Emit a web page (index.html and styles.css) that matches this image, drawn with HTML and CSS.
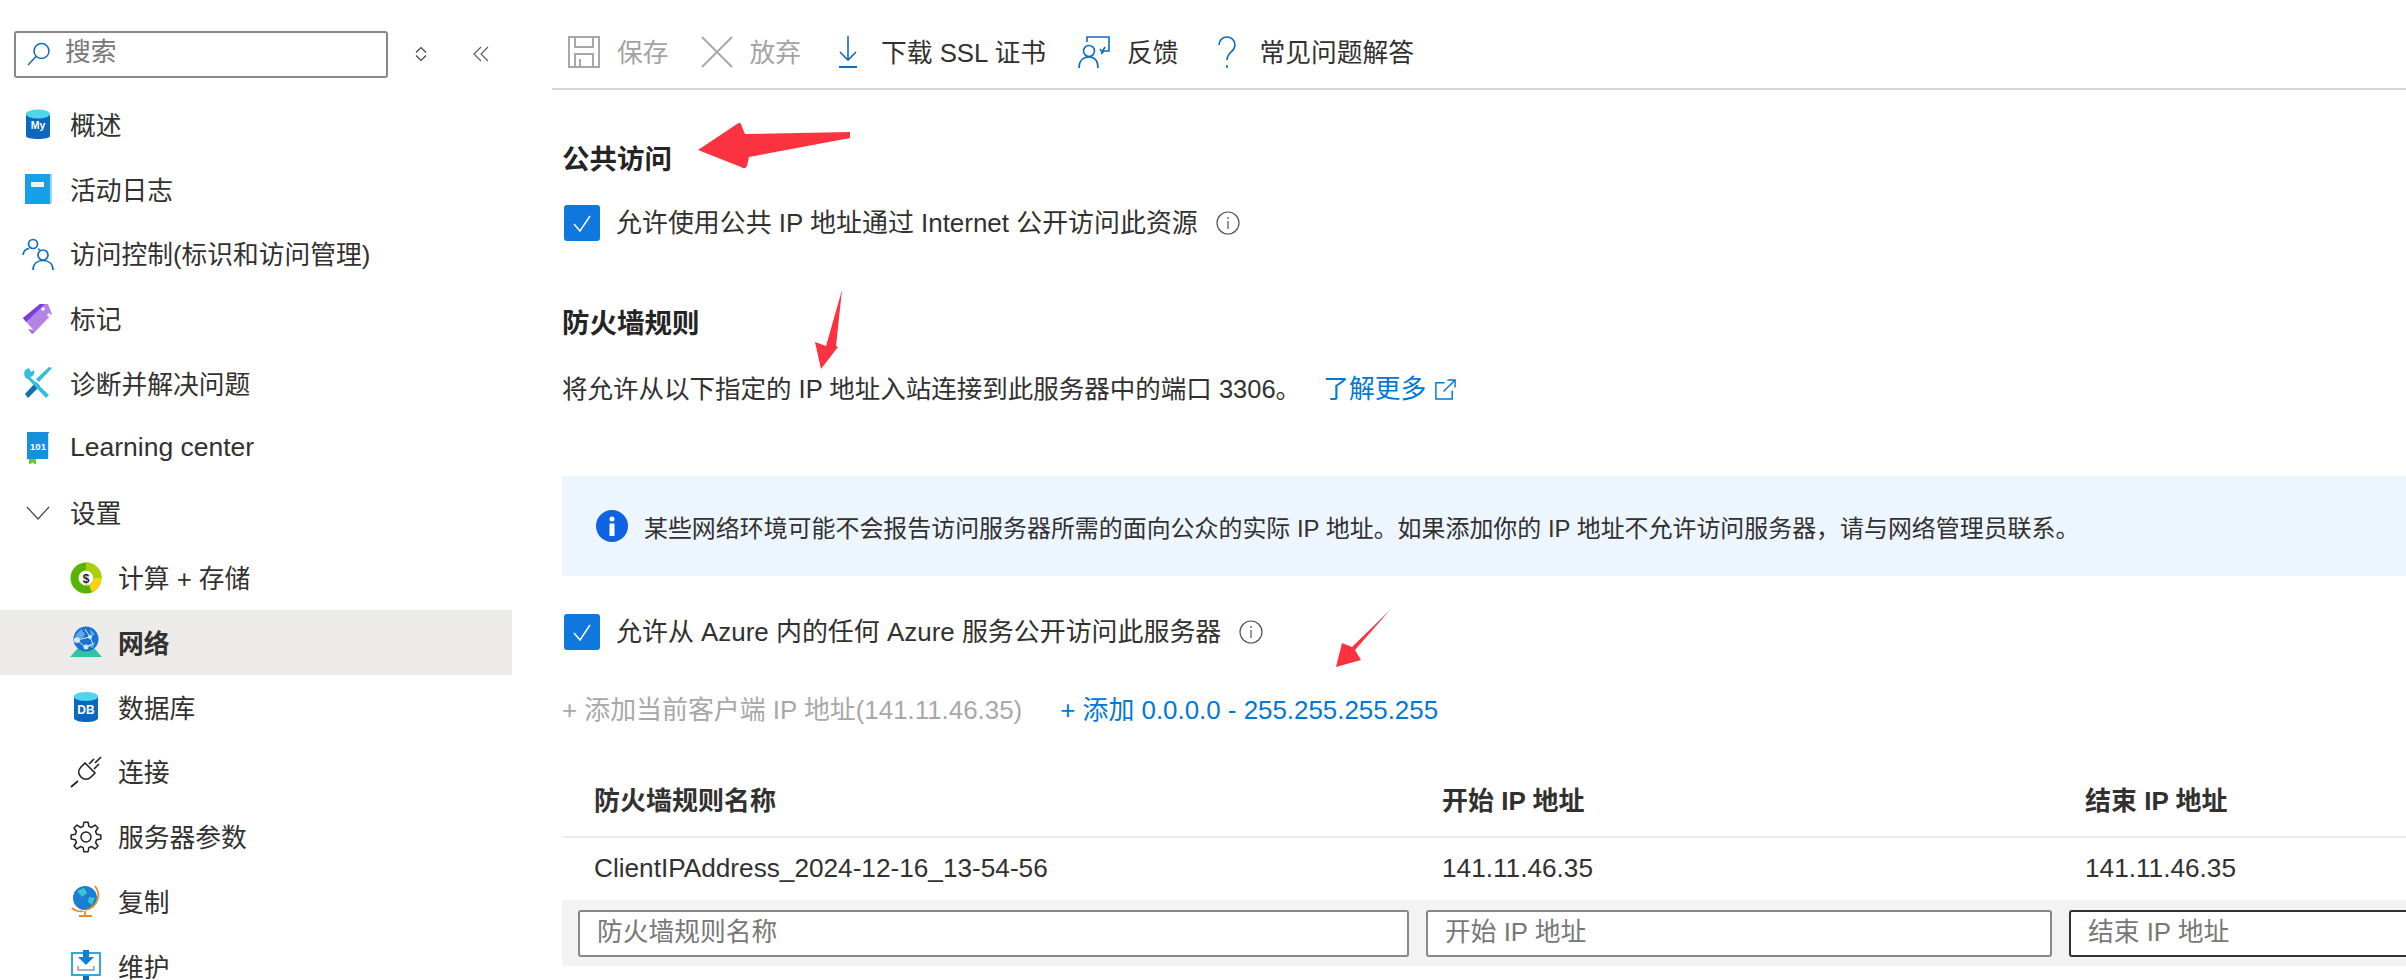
FILE: index.html
```html
<!DOCTYPE html>
<html lang="zh-CN">
<head>
  <meta charset="UTF-8">
  <meta name="viewport" content="width=device-width, initial-scale=1.0">
  <title>网络</title>
  <link rel="stylesheet" href="styles.css">
</head>
<body>

  <aside class="sidebar">
    <div class="search-row">
      <div class="search-box">
        <svg class="search-icon" viewBox="0 0 24 24" fill="none" stroke="#0f6cbd" stroke-width="1.5"><circle cx="14.5" cy="9" r="7.5"/><path d="M9 14.5 1 23"/></svg>
        <input type="text" placeholder="搜索">
      </div>
      <svg class="updown" viewBox="0 0 14 16" fill="none" stroke="#444" stroke-width="1.2"><path d="M2 6.5 7 1.5l5 5M2 9.5l5 5 5-5"/></svg>
      <svg class="collapse" viewBox="0 0 16 16" fill="none" stroke="#555" stroke-width="1.1"><path d="M8 1 1 8l7 7M15 1 8 8l7 7"/></svg>
    </div>

    <ul class="nav">
      <li class="nav-item">
        <svg class="ic" viewBox="0 0 32 32"><path d="M4 6v22c0 2 5.500 3 12 3s12-1 12-3V6z" fill="#0a68bd"/><ellipse cx="16" cy="6" rx="12" ry="4.500" fill="#50d5ea"/><text x="16" y="21" class="ic-text" font-size="10.500">My</text></svg>
        <span>概述</span>
      </li>
      <li class="nav-item">
        <svg class="ic" viewBox="0 0 32 32"><path d="M3 1h25v30H3z" fill="#16a0ea"/><path d="M28 1h2v29l-2 1z" fill="#9ed4f2"/><path d="M9 9h13v5H9z" fill="#e8f4fb"/></svg>
        <span>活动日志</span>
      </li>
      <li class="nav-item">
        <svg class="ic" viewBox="0 0 32 32" fill="none" stroke="#1169c4" stroke-width="1.700"><circle cx="11" cy="6" r="4.500"/><path d="M1 17c.5-4 3-6 6-6.500M16 11c1 .2 1.500 .5 2 1"/><circle cx="21" cy="17" r="5"/><path d="M11 32c0-6 4-9.500 10-9.500S31 26 31 32"/></svg>
        <span>访问控制(标识和访问管理)</span>
      </li>
      <li class="nav-item">
        <svg class="ic" viewBox="0 0 32 32"><path d="M1 15 18 1h8l4 10-17 18z" fill="#b582e6"/><path d="M1 15 18 1h5L4 19z" fill="#7b3fdb"/><path d="M13 29l-3 2-4-5 5 1z" fill="#9c6bd8"/><circle cx="21" cy="6" r="1.800" fill="#fff"/><circle cx="27" cy="12" r="1.800" fill="#fff"/></svg>
        <span>标记</span>
      </li>
      <li class="nav-item">
        <svg class="ic" viewBox="0 0 32 32"><path d="M30 1 17 15l-3-3L27 0z" fill="#32bedd"/><path d="M14 15 3 27l3 4 12-12z" fill="#1071ad"/><path d="M3 3l4-2 2 4 3-2c1 4-1 7-4 7l19 18-3 3-18-19c-3 0-5-5-3-9z" fill="#32bedd"/></svg>
        <span>诊断并解决问题</span>
      </li>
      <li class="nav-item">
        <svg class="ic" viewBox="0 0 32 32"><path d="M5 0h22v27H5z" fill="#1590dc"/><path d="M26 1h1v26h-1z" fill="#cfe8f8"/><path d="M7 27h7v6l-3.500-2.500L7 33z" fill="#6bcb28"/><text x="16" y="18" class="ic-text" font-size="9.500">101</text></svg>
        <span class="latin">Learning center</span>
      </li>
      <li class="nav-item">
        <svg class="ic chevron" viewBox="0 0 24 14" fill="none" stroke="#444" stroke-width="1.200"><path d="M1 1l11 12L23 1"/></svg>
        <span>设置</span>
      </li>
      <li class="nav-item sub">
        <svg class="ic" viewBox="0 0 32 32"><circle cx="16" cy="16" r="11.500" fill="none" stroke="#57b400" stroke-width="8"/><path d="M16 .500A15.500 15.500 0 0 1 31.500 16h-8A7.500 7.500 0 0 0 16 8.500z" fill="#a9d100"/><path d="M31.500 16A15.500 15.500 0 0 1 22 30.300l-3-7.400A7.500 7.500 0 0 0 23.500 16z" fill="#fcd116"/><text x="16" y="20.500" class="ic-dollar">$</text></svg>
        <span>计算 + 存储</span>
      </li>
      <li class="nav-item sub active">
        <svg class="ic" viewBox="0 0 32 32"><path d="M0 31 8 22h16l8 9z" fill="#2fc4a6"/><circle cx="16" cy="13" r="12.500" fill="#1a72cf"/><path d="M5 10l6-7 4 5-3 5zM20 3l5 5-4 3zM17 20l8-4-2 6z" fill="#5ea7e8"/><path d="M7 14l13-3 3 7-8 3zM20 11l-5-8" stroke="#d6e6f7" stroke-width="1" fill="none"/><circle cx="7" cy="14" r="3" fill="#d6e6f7"/><circle cx="20" cy="11" r="2" fill="#d6e6f7"/><circle cx="16" cy="21" r="2.500" fill="#d6e6f7"/></svg>
        <span>网络</span>
      </li>
      <li class="nav-item sub">
        <svg class="ic" viewBox="0 0 32 32"><path d="M4 6v21c0 2.500 5.500 4 12 4s12-1.500 12-4V6z" fill="#0a68bd"/><ellipse cx="16" cy="5.500" rx="12" ry="4.500" fill="#50d5ea"/><text x="16" y="23" class="ic-text" font-size="12">DB</text></svg>
        <span>数据库</span>
      </li>
      <li class="nav-item sub">
        <svg class="ic" viewBox="0 0 32 32" fill="none" stroke="#222" stroke-width="1.700" stroke-linejoin="round"><path d="M1 31l7-6M25 7l6-6M19 8l5-5M24 13l5-5M15 7l10 10-4 4c-3 3-7 3-10 0s-3-7 0-10z"/></svg>
        <span>连接</span>
      </li>
      <li class="nav-item sub">
        <svg class="ic" viewBox="0 0 32 32" fill="none" stroke="#222" stroke-width="1.500" stroke-linejoin="round"><path d="M13.150 5.370 13.910 1.150H18.090L18.850 5.370 21.500 6.470 25.030 4.020 27.980 6.970 25.530 10.500 26.630 13.150 30.850 13.910V18.090L26.630 18.850 25.530 21.500 27.980 25.030 25.030 27.980 21.500 25.530 18.850 26.630 18.090 30.850H13.910L13.150 26.630 10.500 25.530 6.970 27.980 4.020 25.030 6.470 21.500 5.370 18.850 1.150 18.090V13.910L5.370 13.150 6.470 10.500 4.020 6.970 6.970 4.020 10.500 6.470z"/><circle cx="16" cy="16" r="5"/></svg>
        <span>服务器参数</span>
      </li>
      <li class="nav-item sub">
        <svg class="ic" viewBox="0 0 32 32"><circle cx="15" cy="13" r="12" fill="#1a7fd4"/><path d="M7 6l7-3 3 5-5 4zM19 12l6 1-3 7-4-3z" fill="#39c6c6"/><path d="M25 1c6 8 4 20-9 24" fill="none" stroke="#f08a1d" stroke-width="1.800"/><path d="M2 23c3 3 8 4 11 3M15 26v4M9 31h13" fill="none" stroke="#f08a1d" stroke-width="1.800"/></svg>
        <span>复制</span>
      </li>
      <li class="nav-item sub">
        <svg class="ic" viewBox="0 0 32 32"><path d="M2 3h28v22H2z" fill="#fff" stroke="#32a8e0" stroke-width="2"/><path d="M13 0h6v7h5l-8 8-8-8h5z" fill="#0f7fd6"/><path d="M8 16v4h16v-4" fill="none" stroke="#8a9aa5" stroke-width="1.500"/><path d="M13 26h6v5h-6z" fill="#0f6cbd"/></svg>
        <span>维护</span>
      </li>
    </ul>
  </aside>

  <main class="content">
    <div class="toolbar">
      <div class="tool disabled">
        <svg class="tool-icon" viewBox="0 0 32 32" fill="none" stroke="#a8a8a8" stroke-width="2"><path d="M1 1h30v30H1zM7 1v10h18V1M7 31V18h18v13M12 31v-8"/></svg>
        <span>保存</span>
      </div>
      <div class="tool disabled discard">
        <svg class="tool-icon" viewBox="0 0 32 32" fill="none" stroke="#a8a8a8" stroke-width="2"><path d="M1 1l30 30M31 1 1 31"/></svg>
        <span>放弃</span>
      </div>
      <div class="tool narrow">
        <svg class="tool-icon" viewBox="0 0 20 32" fill="none" stroke="#0f6cbd" stroke-width="1.600"><path d="M10 0v24M2 16l8 8 8-8"/><path d="M1 31h18" stroke-width="2"/></svg>
        <span>下载 SSL 证书</span>
      </div>
      <div class="tool feedback">
        <svg class="tool-icon" viewBox="0 0 32 32" fill="none" stroke="#0f6cbd" stroke-width="1.600"><path d="M9 6V1h22v14h-5l-3 3"/><circle cx="11" cy="15" r="5.500"/><path d="M1 32c0-7 4-11 10-11s9 4 9 11M22 13l2 3 3-5"/></svg>
        <span>反馈</span>
      </div>
      <div class="tool narrow">
        <svg class="tool-icon" viewBox="0 0 20 32" fill="none" stroke="#0f6cbd" stroke-width="1.600"><path d="M2 9c0-5 4-8 8-8s8 3 8 8c0 7-8 7-8 15"/><path d="M10 29v3"/></svg>
        <span>常见问题解答</span>
      </div>
    </div>

    <div class="page">
      <h2 class="title first">公共访问</h2>
      <label class="check-row row-public">
        <span class="check"><svg viewBox="0 0 24 24" fill="none" stroke="#fff" stroke-width="1.500"><path d="M4 13l6 7L20 5"/></svg></span>
        <span class="check-text">允许使用公共 IP 地址通过 Internet 公开访问此资源</span>
        <svg class="tip" viewBox="0 0 24 24" fill="none" stroke="#555" stroke-width="1.200"><circle cx="12" cy="12" r="11"/><path d="M12 10v8M12 6v2"/></svg>
      </label>

      <h2 class="title second">防火墙规则</h2>
      <p class="desc">将允许从以下指定的 IP 地址入站连接到此服务器中的端口 3306。 <a href="#" class="link">了解更多</a>
        <svg class="ext" viewBox="0 0 24 24" fill="none" stroke="#0078d4" stroke-width="1.500"><path d="M11 5H2v17h17v-9M14 2h8v8M22 2 10 14"/></svg>
      </p>

      <div class="notice">
        <svg class="notice-icon" viewBox="0 0 32 32"><circle cx="16" cy="16" r="16" fill="#0f62e0"/><circle cx="16" cy="9" r="2.500" fill="#fff"/><path d="M13.500 13.500h5V26h-5z" fill="#fff"/></svg>
        <span>某些网络环境可能不会报告访问服务器所需的面向公众的实际 IP 地址。如果添加你的 IP 地址不允许访问服务器，请与网络管理员联系。</span>
      </div>

      <label class="check-row row-azure">
        <span class="check"><svg viewBox="0 0 24 24" fill="none" stroke="#fff" stroke-width="1.500"><path d="M4 13l6 7L20 5"/></svg></span>
        <span class="check-text">允许从 Azure 内的任何 Azure 服务公开访问此服务器</span>
        <svg class="tip" viewBox="0 0 24 24" fill="none" stroke="#555" stroke-width="1.200"><circle cx="12" cy="12" r="11"/><path d="M12 10v8M12 6v2"/></svg>
      </label>

      <div class="add-row">
        <span class="add-off">+ 添加当前客户端 IP 地址(141.11.46.35)</span>
        <a href="#" class="add-on">+ 添加 0.0.0.0 - 255.255.255.255</a>
      </div>

      <div class="rules">
        <div class="rule-row rule-head">
          <div>防火墙规则名称</div>
          <div>开始 IP 地址</div>
          <div>结束 IP 地址</div>
        </div>
        <div class="rule-row rule-body">
          <div>ClientIPAddress_2024-12-16_13-54-56</div>
          <div>141.11.46.35</div>
          <div>141.11.46.35</div>
        </div>
        <div class="rule-row rule-new">
          <input type="text" placeholder="防火墙规则名称">
          <input type="text" placeholder="开始 IP 地址">
          <input type="text" class="focused" placeholder="结束 IP 地址">
        </div>
      </div>
    </div>
  </main>

  <!-- red arrows someone drew on the screenshot -->
  <svg class="marks" viewBox="0 0 2406 980" fill="#fb3340">
    <path d="M698 150 737 124Q741 121 742 127L745 134 850 132V138L749 157 747 166Q745 170 741 167Z"/>
    <path d="M842 290 836 346 838 347 821 369 815 342 826 346Z"/>
    <path d="M1390 610 1352 647 1342 643 1336 667 1361 660 1355 650Z"/>
  </svg>

</body>
</html>
```

FILE: styles.css
```css
* {
  margin: 0;
  padding: 0;
  box-sizing: border-box;
}

html, body {
  height: 980px;
  overflow: hidden;
}

body {
  position: relative;
  display: flex;
  font-family: "Liberation Sans", "Noto Sans CJK SC", sans-serif;
  font-size: 25.75px;
  color: #323130;
  background-color: #fff;
}

input {
  font-family: inherit;
  font-size: 25.75px;
  outline: none;
  background-color: #fff;
}

input::placeholder {
  color: #777;
  opacity: 1;
}

a {
  text-decoration: none;
}

/* left menu */
.sidebar {
  width: 512px;
  flex-shrink: 0;
}

.search-row {
  display: flex;
  align-items: center;
  height: 92px;
  padding: 31px 0 15px 14px;
}

.search-box {
  display: flex;
  align-items: center;
  width: 374px;
  height: 47px;
  padding-left: 11px;
  border: 2px solid #8a8886;
  border-radius: 3px;
}

.search-box input {
  width: 300px;
  margin-left: 14px;
  padding-bottom: 3px;
  border: none;
}

.search-icon {
  width: 24px;
  height: 24px;
}

.updown {
  width: 14px;
  height: 16px;
  margin-left: 26px;
}

.collapse {
  width: 16px;
  height: 16px;
  margin-left: 45px;
}

.nav {
  list-style: none;
}

.nav-item {
  display: flex;
  align-items: center;
  height: 64.75px;
  padding-left: 22px;
}

.nav-item span {
  margin-left: 16px;
  padding-bottom: 2px;
}

.nav-item .latin {
  font-size: 26.5px;
}

.nav-item.sub {
  padding-left: 70px;
}

.nav-item.active {
  background-color: #edebe9;
  font-weight: 700;
}

.ic {
  width: 32px;
  height: 32px;
  flex-shrink: 0;
}

.chevron {
  height: 14px;
}

.ic-text {
  fill: #fff;
  font-weight: 700;
  text-anchor: middle;
}

.ic-dollar {
  font-size: 12px;
  font-weight: 700;
  text-anchor: middle;
  fill: #222;
}

/* main part */
.content {
  flex: 1;
  min-width: 0;
  padding-left: 40px;
}

.toolbar {
  display: flex;
  align-items: center;
  height: 90px;
  padding: 16px 0 0 16px;
  border-bottom: 2px solid #d6d6d6;
}

.tool {
  display: flex;
  align-items: center;
  margin-right: 32px;
}

.tool span {
  margin-left: 17px;
  padding-bottom: 3px;
  white-space: nowrap;
}

.tool.disabled {
  color: #a3a3a3;
}

.tool.discard {
  margin-right: 37px;
}

.tool.feedback {
  margin-right: 38px;
}

.tool-icon {
  width: 32px;
  height: 32px;
}

.tool.narrow {
  margin-right: 32px;
}

.tool.narrow .tool-icon {
  width: 20px;
}

.tool.narrow span {
  margin-left: 23px;
}

.page {
  padding-left: 10px;
}

.title {
  font-size: 27.5px;
  line-height: 36px;
  font-weight: 700;
  color: #242424;
}

.title.first {
  margin-top: 52px;
}

.title.second {
  margin-top: 65px;
}

.check-row {
  display: flex;
  align-items: center;
  height: 36px;
  padding-left: 2px;
}

.row-public {
  margin-top: 27px;
}

.row-azure {
  margin-top: 38px;
}

.check {
  display: flex;
  align-items: center;
  justify-content: center;
  width: 36px;
  height: 36px;
  margin-right: 16px;
  border-radius: 3px;
  background-color: #0e78de;
}

.check svg {
  width: 24px;
  height: 24px;
}

.check-text {
  padding-bottom: 5px;
  font-size: 25.95px;
}

.tip {
  width: 24px;
  height: 24px;
  margin-left: 18px;
}

.desc {
  margin-top: 29px;
  font-size: 25.5px;
  line-height: 36px;
  display: flex;
  align-items: center;
  white-space: pre;
}

.link {
  font-size: 25.75px;
  color: #0078d4;
  margin-left: 15px;
}

.ext {
  width: 23px;
  height: 23px;
  margin-left: 8px;
}

.notice {
  display: flex;
  align-items: center;
  height: 100px;
  margin-top: 69px;
  padding-left: 34px;
  font-size: 23.95px;
  background-color: #edf5fe;
}

.notice-icon {
  width: 32px;
  height: 32px;
  margin-right: 16px;
}

.add-row {
  display: flex;
  margin-top: 42px;
  font-size: 25.9px;
  line-height: 36px;
}

.add-off {
  color: #a8a8a8;
}

.add-on {
  margin-left: 38px;
  color: #0078d4;
}

.rules {
  margin-top: 35px;
}

.rule-row {
  display: grid;
  grid-template-columns: 831px 626px 400px;
  column-gap: 17px;
  padding-left: 16px;
}

.rule-head {
  height: 75px;
  padding-bottom: 3px;
  align-items: center;
  font-weight: 700;
  font-size: 26px;
  border-bottom: 2px solid #ececec;
}

.rule-head div,
.rule-body div {
  padding-left: 16px;
}

.rule-body {
  height: 62px;
  padding-bottom: 1px;
  font-size: 26.2px;
  align-items: center;
}

.rule-new {
  height: 66px;
  align-items: center;
  background-color: #f3f3f3;
}

.rule-new input {
  width: 100%;
  height: 47px;
  padding: 0 0 1px 17px;
  border: 2px solid #8a8886;
  border-radius: 3px;
}

.rule-new input.focused {
  border-color: #333;
}

/* annotations on top of the page */
.marks {
  position: absolute;
  left: 0;
  top: 0;
  width: 2406px;
  height: 980px;
  pointer-events: none;
}
```
